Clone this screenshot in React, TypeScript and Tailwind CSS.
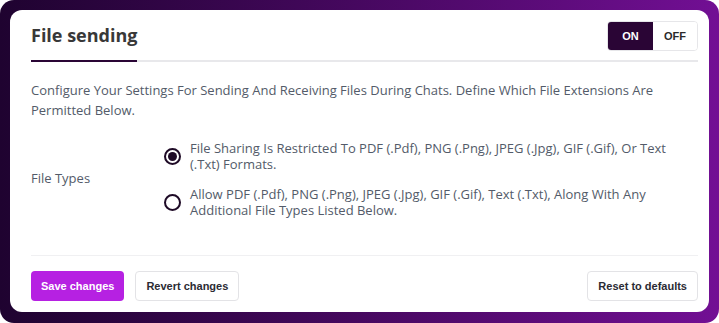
import { useState } from "react";

export default function App() {
  const [enabled, setEnabled] = useState(true);
  const [fileMode, setFileMode] = useState<"restricted" | "extended">("restricted");

  const body = { fontFamily: '"Open Sans", "Noto Sans", sans-serif' };
  const btn = { fontFamily: '"Liberation Sans", Arial, sans-serif' };

  return (
    <div className="w-[719px] h-[323px] rounded-[14px] bg-gradient-to-r from-[#1f0330] to-[#720f94] pt-[10px] pb-[11px] pl-[10px] pr-[10px]">
      <div className="h-full bg-white rounded-[12px] pl-[21px] pr-[11px] pt-[11px] flex flex-col" style={body}>
        {/* header */}
        <div className="flex items-end justify-between border-b-2 border-[#e8e8eb]">
          <div className="-mb-[2px] border-b-2 border-[#2a0535] pb-[11px]">
            <h1 className="text-[18px] leading-[27px] font-bold text-[#383838]">File sending</h1>
          </div>
          <div className="mb-[9px] flex h-[30px] rounded-[4px] border border-[#e6e6e9] overflow-hidden" style={btn}>
            <button
              onClick={() => setEnabled(true)}
              className={`w-[45px] text-[11px] font-bold ${enabled ? "bg-[#2a0535] text-white" : "bg-white text-[#2a2a2a]"}`}
            >
              ON
            </button>
            <button
              onClick={() => setEnabled(false)}
              className={`w-[44px] text-[11px] font-bold ${!enabled ? "bg-[#2a0535] text-white" : "bg-white text-[#2a2a2a]"}`}
            >
              OFF
            </button>
          </div>
        </div>

        <p className="mt-[18px] text-[13px] leading-[20px] text-[#535b69]">
          Configure Your Settings For Sending And Receiving Files During Chats. Define Which File Extensions Are
          Permitted Below.
        </p>

        {/* file types */}
        <div className="mt-[20px] flex items-center">
          <div className="w-[133px] text-[13px] text-[#535b69]">File Types</div>
          <div className="flex-1 flex flex-col gap-[14px]">
            <label className="flex items-center gap-[9px] cursor-pointer" onClick={() => setFileMode("restricted")}>
              <span className="w-[17px] h-[17px] shrink-0 rounded-full border-2 border-[#1e0a26] flex items-center justify-center">
                {fileMode === "restricted" && <span className="w-[9px] h-[9px] rounded-full bg-[#1e0a26]" />}
              </span>
              <span className="text-[13px] leading-[16px] text-[#535b69]">
                File Sharing Is Restricted To PDF (.Pdf), PNG (.Png), JPEG (.Jpg), GIF (.Gif), Or Text (.Txt) Formats.
              </span>
            </label>
            <label className="flex items-center gap-[9px] cursor-pointer" onClick={() => setFileMode("extended")}>
              <span className="w-[17px] h-[17px] shrink-0 rounded-full border-2 border-[#1e0a26] flex items-center justify-center">
                {fileMode === "extended" && <span className="w-[9px] h-[9px] rounded-full bg-[#1e0a26]" />}
              </span>
              <span className="text-[13px] leading-[16px] text-[#535b69]">
                Allow PDF (.Pdf), PNG (.Png), JPEG (.Jpg), GIF (.Gif), Text (.Txt), Along With Any Additional File Types
                Listed Below.
              </span>
            </label>
          </div>
        </div>

        {/* footer */}
        <div className="mt-auto border-t border-[#f0f0f2] pt-[15px] pb-[11px] flex justify-between" style={btn}>
          <div className="flex gap-[11px]">
            <button className="h-[30px] px-[10px] rounded-[4px] bg-[#b621e2] text-white text-[11px] font-bold">
              Save changes
            </button>
            <button className="h-[30px] px-[10px] rounded-[4px] border border-[#e3e3e6] bg-white text-[#2b2b33] text-[11px] font-bold">
              Revert changes
            </button>
          </div>
          <button className="h-[30px] px-[10px] rounded-[4px] border border-[#e3e3e6] bg-white text-[#2b2b33] text-[11px] font-bold">
            Reset to defaults
          </button>
        </div>
      </div>
    </div>
  );
}
